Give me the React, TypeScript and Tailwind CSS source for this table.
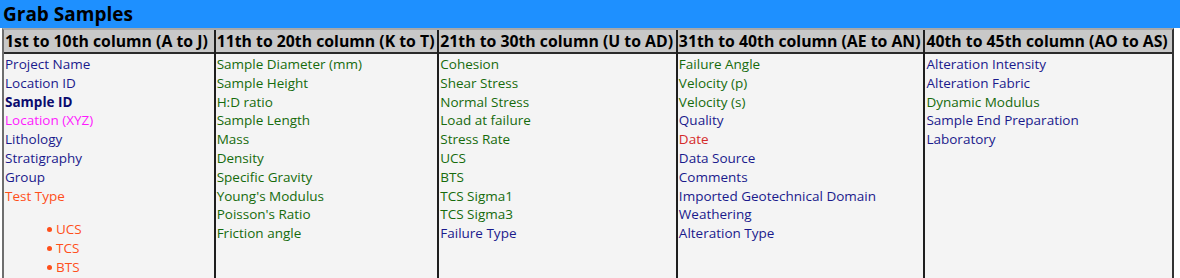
import React from 'react'

type Item = { label: string; tone: keyof typeof TONES; bold?: boolean }

const TONES = {
  blue: 'text-[#1a1a8c]',
  navy: 'text-[#0b0b6e]',
  green: 'text-[#166b0c]',
  magenta: 'text-[#ff1aff]',
  orange: 'text-[#ff4f1a]',
  red: 'text-[#d42a2a]',
}

const COLUMNS: { title: string; width: string; items: Item[] }[] = [
  {
    title: '1st to 10th column (A to J)',
    width: 'w-[210px]',
    items: [
      { label: 'Project Name', tone: 'blue' },
      { label: 'Location ID', tone: 'blue' },
      { label: 'Sample ID', tone: 'navy', bold: true },
      { label: 'Location (XYZ)', tone: 'magenta' },
      { label: 'Lithology', tone: 'blue' },
      { label: 'Stratigraphy', tone: 'blue' },
      { label: 'Group', tone: 'blue' },
      { label: 'Test Type', tone: 'orange' },
    ],
  },
  {
    title: '11th to 20th column (K to T)',
    width: 'w-[224px]',
    items: [
      { label: 'Sample Diameter (mm)', tone: 'green' },
      { label: 'Sample Height', tone: 'green' },
      { label: 'H:D ratio', tone: 'green' },
      { label: 'Sample Length', tone: 'green' },
      { label: 'Mass', tone: 'green' },
      { label: 'Density', tone: 'green' },
      { label: 'Specific Gravity', tone: 'green' },
      { label: "Young's Modulus", tone: 'green' },
      { label: "Poisson's Ratio", tone: 'green' },
      { label: 'Friction angle', tone: 'green' },
    ],
  },
  {
    title: '21th to 30th column (U to AD)',
    width: 'w-[239px]',
    items: [
      { label: 'Cohesion', tone: 'green' },
      { label: 'Shear Stress', tone: 'green' },
      { label: 'Normal Stress', tone: 'green' },
      { label: 'Load at failure', tone: 'green' },
      { label: 'Stress Rate', tone: 'green' },
      { label: 'UCS', tone: 'green' },
      { label: 'BTS', tone: 'green' },
      { label: 'TCS Sigma1', tone: 'green' },
      { label: 'TCS Sigma3', tone: 'green' },
      { label: 'Failure Type', tone: 'blue' },
    ],
  },
  {
    title: '31th to 40th column (AE to AN)',
    width: 'w-[248px]',
    items: [
      { label: 'Failure Angle', tone: 'green' },
      { label: 'Velocity (p)', tone: 'green' },
      { label: 'Velocity (s)', tone: 'green' },
      { label: 'Quality', tone: 'blue' },
      { label: 'Date', tone: 'red' },
      { label: 'Data Source', tone: 'blue' },
      { label: 'Comments', tone: 'blue' },
      { label: 'Imported Geotechnical Domain', tone: 'blue' },
      { label: 'Weathering', tone: 'blue' },
      { label: 'Alteration Type', tone: 'blue' },
    ],
  },
  {
    title: '40th to 45th column (AO to AS)',
    width: 'w-[249px]',
    items: [
      { label: 'Alteration Intensity', tone: 'blue' },
      { label: 'Alteration Fabric', tone: 'blue' },
      { label: 'Dynamic Modulus', tone: 'green' },
      { label: 'Sample End Preparation', tone: 'blue' },
      { label: 'Laboratory', tone: 'blue' },
    ],
  },
]

const TEST_TYPES = ['UCS', 'TCS', 'BTS']

export default function App() {
  return (
    <div className="w-[1180px] h-[278px] bg-white font-['Segoe_UI','Open_Sans',sans-serif] text-[13.5px]">
      <div className="h-[28px] bg-[#1e90ff] px-[3px]">
        <h1 className="text-[19px] font-bold leading-[28px] text-black">Grab Samples</h1>
      </div>

      <div className="ml-[2px] flex w-[1172px] border-2 border-t-[#a8a8a8] border-l-[#6e6e6e] border-b-[#555] border-r-[#333]">
        {COLUMNS.map((col, i) => (
          <div key={col.title} className={`${col.width} flex flex-col ${i > 0 ? 'border-l-2 border-[#1e1e1e]' : ''}`}>
            <div className="h-[24px] bg-[#c8c8c8] border-b-2 border-[#2a2a2a] px-[1px] text-[15.8px] font-bold leading-[22px] text-black whitespace-nowrap">
              {col.title}
            </div>
            <div className="flex-1 bg-[#f4f4f4] px-[1px] pt-[1px] pb-[2px] leading-[18.8px]">
              {col.items.map(item => (
                <div key={item.label} className={`${TONES[item.tone]} ${item.bold ? 'font-bold' : ''}`}>
                  {item.label}
                </div>
              ))}
              {i === 0 && (
                <ul className="mt-[15px] pl-[42px]">
                  {TEST_TYPES.map(t => (
                    <li key={t} className="flex items-center gap-[4px] text-[#ff4f1a]">
                      <span className="w-[5px] h-[5px] rounded-full bg-[#ff4f1a]" />
                      {t}
                    </li>
                  ))}
                </ul>
              )}
            </div>
          </div>
        ))}
      </div>
    </div>
  )
}
